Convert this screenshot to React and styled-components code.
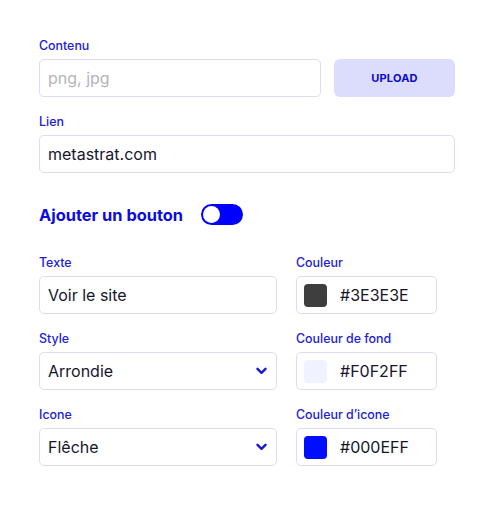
import styled, { createGlobalStyle } from "styled-components";

const Global = createGlobalStyle`
  body {
    margin: 0;
    background: #ffffff;
    font-family: Inter, "Noto Sans", sans-serif;
  }
`;

const Page = styled.div`
  padding: 39px 39px 30px 39px;
  width: 416px;
  display: flex;
  flex-direction: column;
`;

const Field = styled.div`
  display: flex;
  flex-direction: column;
  gap: 6px;
`;

const Label = styled.div`
  font-size: 12.4px;
  line-height: 14px;
  font-weight: 500;
  color: #2020d6;
`;

const TopRow = styled.div`
  display: flex;
  gap: 13px;
`;

const Input = styled.div`
  box-sizing: border-box;
  height: 38px;
  width: ${(p) => p.w || "100%"};
  border: 1px solid #dcdcf2;
  border-radius: 5px;
  padding: 0 9px 0 8px;
  display: flex;
  align-items: center;
  gap: 13px;
  font-size: 16px;
  color: ${(p) => (p.placeholder ? "#b4b4bc" : "#16162a")};
  background: #fff;
`;

const UploadButton = styled.button`
  width: 121px;
  height: 38px;
  border: none;
  border-radius: 6px;
  background: #dcdcfd;
  color: #0a0acc;
  font-family: inherit;
  font-size: 11px;
  font-weight: 700;
  letter-spacing: 0.2px;
`;

const Section = styled.div`
  margin-top: ${(p) => p.mt || 0}px;
`;

const HeadingRow = styled.div`
  display: flex;
  align-items: center;
  gap: 18px;
  margin-top: 31px;
`;

const Heading = styled.div`
  font-size: 16.4px;
  font-weight: 700;
  color: #0b0be0;
`;

const Toggle = styled.div`
  width: 42px;
  height: 21px;
  border-radius: 11px;
  background: #0000ff;
  position: relative;
  &::after {
    content: "";
    position: absolute;
    left: 2px;
    top: 2px;
    width: 17px;
    height: 17px;
    border-radius: 50%;
    background: #fff;
  }
`;

const Grid = styled.div`
  display: grid;
  grid-template-columns: 238px 141px;
  column-gap: 19px;
  row-gap: 18px;
  margin-top: 31px;
`;

const Value = styled.span`
  flex: 1;
`;

const Swatch = styled.span`
  width: 23px;
  height: 23px;
  border-radius: 4px;
  background: ${(p) => p.color};
  margin-left: -1px;
`;

const Chevron = () => (
  <svg width="11" height="8" viewBox="0 0 11 8">
    <path d="M1.5 1.8 L5.5 5.8 L9.5 1.8" fill="none" stroke="#1a1ad0" strokeWidth="2.4" strokeLinecap="round" strokeLinejoin="round" />
  </svg>
);

export default function App() {
  return (
    <>
      <Global />
      <Page>
        <Field>
          <Label>Contenu</Label>
          <TopRow>
            <Input w="282px" placeholder="1">png, jpg</Input>
            <UploadButton>UPLOAD</UploadButton>
          </TopRow>
        </Field>
        <Section mt={18}>
          <Field>
            <Label>Lien</Label>
            <Input>metastrat.com</Input>
          </Field>
        </Section>
        <HeadingRow>
          <Heading>Ajouter un bouton</Heading>
          <Toggle />
        </HeadingRow>
        <Grid>
          <Field>
            <Label>Texte</Label>
            <Input>Voir le site</Input>
          </Field>
          <Field>
            <Label>Couleur</Label>
            <Input>
              <Swatch color="#3e3e3e" />
              <Value>#3E3E3E</Value>
            </Input>
          </Field>
          <Field>
            <Label>Style</Label>
            <Input>
              <Value>Arrondie</Value>
              <Chevron />
            </Input>
          </Field>
          <Field>
            <Label>Couleur de fond</Label>
            <Input>
              <Swatch color="#f0f2ff" />
              <Value>#F0F2FF</Value>
            </Input>
          </Field>
          <Field>
            <Label>Icone</Label>
            <Input>
              <Value>Flêche</Value>
              <Chevron />
            </Input>
          </Field>
          <Field>
            <Label>Couleur d’icone</Label>
            <Input>
              <Swatch color="#000eff" />
              <Value>#000EFF</Value>
            </Input>
          </Field>
        </Grid>
      </Page>
    </>
  );
}
